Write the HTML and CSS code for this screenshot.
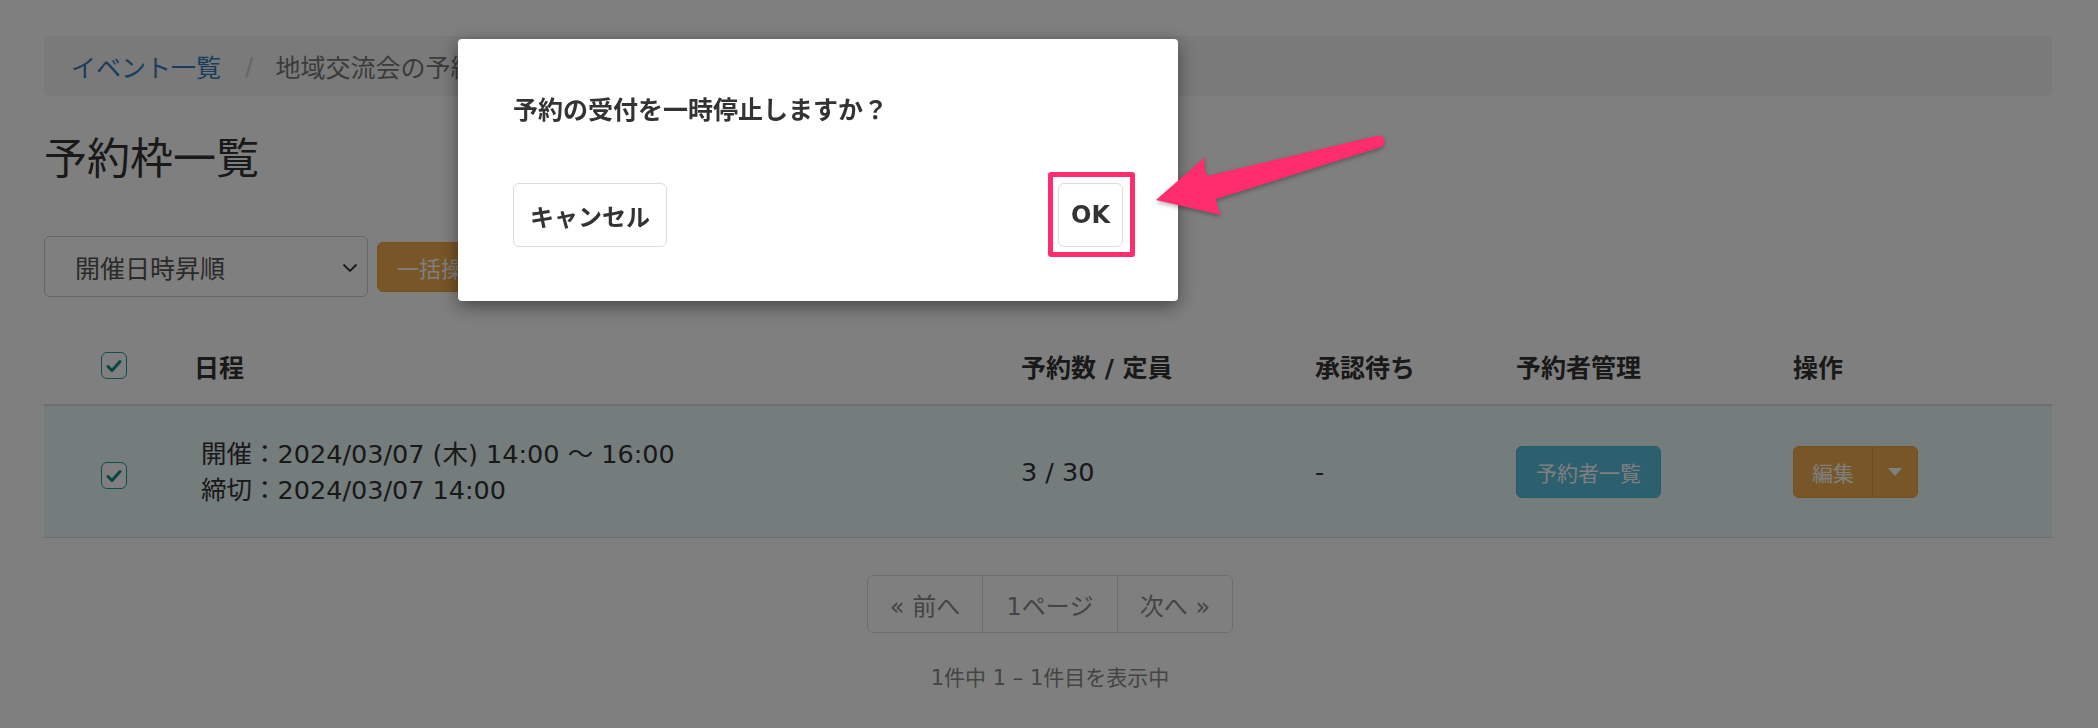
FILE: index.html
```html
<!DOCTYPE html>
<html lang="ja">
<head>
<meta charset="utf-8">
<title>予約枠一覧</title>
<link rel="stylesheet" href="styles.css">
</head>
<body>
<div class="page">
  <nav class="crumbs">
    <a class="crumb-link">イベント一覧</a>
    <span class="crumb-sep">/</span>
    <span class="crumb-current">地域交流会の予約枠一覧</span>
  </nav>
  <h1 class="title">予約枠一覧</h1>
  <div class="toolbar">
    <div class="select">
      <span>開催日時昇順</span>
      <svg class="chev" width="16" height="10" viewBox="0 0 16 10"><path d="M1.5 1.5 L8 8 L14.5 1.5" fill="none" stroke="#333" stroke-width="1.8"/></svg>
    </div>
    <div class="btn btn-warning">一括操作</div>
  </div>
  <div class="table">
    <div class="row head">
      <div class="cell cb"><span class="check"><svg width="16" height="14" viewBox="0 0 16 14"><path d="M2 7.5 L6 11.5 L14 2.5" fill="none" stroke="#0f8f86" stroke-width="3" stroke-linecap="round" stroke-linejoin="round"/></svg></span></div>
      <div class="cell">日程</div>
      <div class="cell">予約数 / 定員</div>
      <div class="cell">承認待ち</div>
      <div class="cell">予約者管理</div>
      <div class="cell">操作</div>
    </div>
    <div class="row body selected">
      <div class="cell cb"><span class="check"><svg width="16" height="14" viewBox="0 0 16 14"><path d="M2 7.5 L6 11.5 L14 2.5" fill="none" stroke="#0f8f86" stroke-width="3" stroke-linecap="round" stroke-linejoin="round"/></svg></span></div>
      <div class="cell sched">
        <div>開催：2024/03/07 (木) 14:00 〜 16:00</div>
        <div>締切：2024/03/07 14:00</div>
      </div>
      <div class="cell">3 / 30</div>
      <div class="cell">-</div>
      <div class="cell"><span class="btn btn-info">予約者一覧</span></div>
      <div class="cell">
        <span class="split">
          <span class="split-main">編集</span>
          <span class="split-caret"><span class="caret"></span></span>
        </span>
      </div>
    </div>
  </div>
  <div class="pager-wrap">
    <div class="pager">
      <span class="pg">« 前へ</span>
      <span class="pg">1ページ</span>
      <span class="pg">次へ »</span>
    </div>
    <div class="count">1件中 1 – 1件目を表示中</div>
  </div>
</div>

<div class="overlay"></div>

<div class="modal">
  <p class="msg">予約の受付を一時停止しますか？</p>
  <div class="modal-foot">
    <span class="mbtn">キャンセル</span>
    <span class="mbtn ok">OK</span>
  </div>
</div>

<div class="highlight"></div>
<svg class="arrow" width="260" height="110" viewBox="0 0 260 110">
  <path d="M16,75 L65,32 Q63,42 67,51 L236,11 A5.8,5.8 0 0 1 241,22 L76,74 Q77,83 81,90 Z" fill="#ff2d6e"/>
</svg>
</body>
</html>
```

FILE: styles.css
```css
* { box-sizing: border-box; }
html, body { margin: 0; padding: 0; }
body {
  width: 2098px;
  height: 728px;
  overflow: hidden;
  background: #fff;
  color: #333;
  font-family: "DejaVu Sans", "Noto Sans CJK JP", sans-serif;
  font-size: 24px;
}
.page {
  padding: 36px 46px 0 44px;
}
.crumbs {
  display: flex;
  align-items: center;
  height: 60px;
  padding: 0 27px;
  background: #f5f5f5;
  border-radius: 6px;
  font-size: 25px;
  white-space: nowrap;
}
.crumb-link { color: #337ab7; }
.crumb-sep { color: #ccc; margin: 0 22px 0 24px; }
.crumb-current { color: #777; }
.title {
  margin: 38px 0 0 0;
  font-size: 43px;
  font-weight: 400;
  line-height: 50px;
}
.toolbar {
  display: flex;
  align-items: center;
  gap: 9px;
  margin-top: 52px;
}
.select {
  width: 324px;
  height: 61px;
  border: 1px solid #ccc;
  border-radius: 6px;
  display: flex;
  align-items: center;
  justify-content: space-between;
  padding: 0 9px 0 30px;
  color: #555;
  font-size: 25px;
  background: #fff;
}
.chev { margin-top: 2px; }
.btn {
  display: inline-flex;
  align-items: center;
  justify-content: center;
  color: #fff;
  border-radius: 6px;
  font-size: 22px;
  white-space: nowrap;
}
.btn-warning {
  height: 50px;
  padding: 0 19px;
  background: #f0ad4e;
  border: 1px solid #eea236;
}
.table { margin-top: 30px; }
.row {
  display: grid;
  grid-template-columns: 136px 825px 294px 201px 277px 1fr;
  align-items: center;
}
.row.head {
  height: 79px;
  border-bottom: 2px solid #ddd;
  font-weight: 700;
  font-size: 25px;
}
.row.body {
  height: 132px;
  border-bottom: 1px solid #ddd;
  font-size: 25.5px;
}
.row.selected { background: #e8f8f8; }
.cell { padding-left: 16px; white-space: nowrap; }
.row.head .cell:nth-child(2) { padding-left: 14px; }
.cell.cb { padding-left: 57px; display: flex; align-items: center; }
.row.body .cell.cb { padding-top: 8px; }
.check {
  width: 26px;
  height: 27px;
  border: 1.5px solid #1f9e94;
  border-radius: 6px;
  background: #fff;
  display: inline-flex;
  align-items: center;
  justify-content: center;
}
.sched { padding-left: 21px; line-height: 36px; }
.btn-info {
  height: 52px;
  padding: 0 19px;
  background: #5bc0de;
  border: 1px solid #46b8da;
  font-size: 21px;
}
.split {
  display: inline-flex;
  height: 52px;
  border-radius: 6px;
  background: #f0ad4e;
  border: 1px solid #eea236;
  color: #fff;
  font-size: 21px;
  overflow: hidden;
}
.split-main {
  display: flex;
  align-items: center;
  padding: 0 18px;
  border-right: 1px solid #e09a35;
}
.split-caret {
  display: flex;
  align-items: center;
  padding: 0 15px 0 15px;
}
.caret {
  width: 0;
  height: 0;
  border-left: 7px solid transparent;
  border-right: 7px solid transparent;
  border-top: 8px solid #fff;
}
.pager-wrap {
  display: flex;
  flex-direction: column;
  align-items: center;
  margin-top: 37px;
}
.pager {
  display: flex;
  height: 58px;
  border: 1px solid #ddd;
  border-radius: 6px;
  margin-left: 4px;
}
.pg {
  display: flex;
  align-items: center;
  justify-content: center;
  color: #888;
  font-size: 24px;
  border-left: 1px solid #ddd;
  white-space: nowrap;
}
.pg:first-child { border-left: 0; width: 114px; }
.pg:nth-child(2) { width: 135px; }
.pg:nth-child(3) { width: 115px; }
.count {
  margin-top: 28px;
  font-size: 21px;
  color: #888;
  margin-left: 4px;
}
.overlay {
  position: fixed;
  inset: 0;
  background: rgba(0, 0, 0, 0.5);
}
.modal {
  position: absolute;
  left: 458px;
  top: 39px;
  width: 720px;
  height: 262px;
  background: #fff;
  border-radius: 4px;
  box-shadow: 0 5px 18px rgba(0, 0, 0, 0.45);
  padding: 55px 55px 54px 55px;
  display: flex;
  flex-direction: column;
  justify-content: space-between;
}
.msg {
  margin: 0;
  font-size: 25px;
  font-weight: 700;
  line-height: 34px;
  color: #333;
}
.modal-foot {
  display: flex;
  justify-content: space-between;
}
.mbtn {
  display: inline-flex;
  align-items: center;
  justify-content: center;
  height: 64px;
  padding: 0 16px;
  border: 1px solid #ddd;
  border-radius: 6px;
  font-weight: 700;
  font-size: 24px;
  color: #333;
  background: #fff;
}
.mbtn.ok { width: 65px; padding: 0; }
.highlight {
  position: absolute;
  left: 1048px;
  top: 172px;
  width: 87px;
  height: 85px;
  border: 5px solid #ff2d6e;
  border-radius: 3px;
}
.arrow {
  position: absolute;
  left: 1140px;
  top: 125px;
  filter: drop-shadow(0 2px 2px rgba(0, 0, 0, 0.3));
}
```
